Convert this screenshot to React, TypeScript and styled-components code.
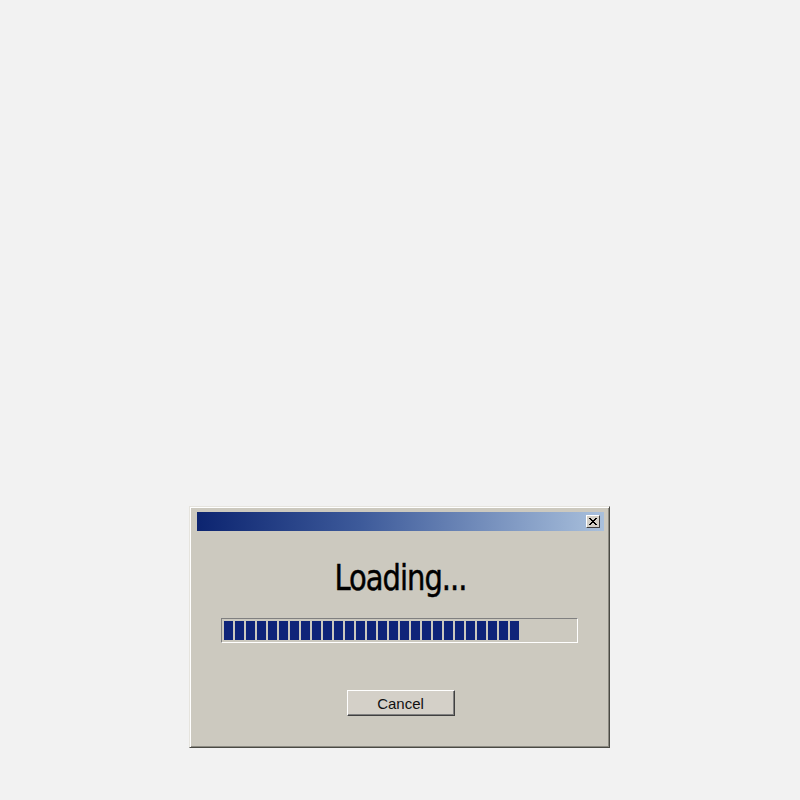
import React from 'react'
import styled, { createGlobalStyle } from 'styled-components'

const GlobalStyle = createGlobalStyle`
	html, body {
		margin: 0;
		padding: 0;
		background: #f2f2f2;
	}
`

const TOTAL_BLOCKS = 27

export default function App() {
	return (
		<>
			<GlobalStyle />
			<Page>
				<Dialog>
					<TitleBar>
						<CloseButton aria-label="Close">
							<svg width="8" height="7" viewBox="0 0 8 7">
								<path d="M0 0h2v1h1v1h2V1h1V0h2v1H7v1H6v1H5v1h1v1h1v1h1v1H6V6H5V5H3v1H2v1H0V6h1V5h1V4h1V3H2V2H1V1H0z" fill="#000" />
							</svg>
						</CloseButton>
					</TitleBar>
					<Body>
						<Heading>Loading...</Heading>
						<ProgressTrack>
							{Array.from({ length: TOTAL_BLOCKS }).map((_, i) => (
								<Block key={i} />
							))}
						</ProgressTrack>
						<ActionButton>Cancel</ActionButton>
					</Body>
				</Dialog>
			</Page>
		</>
	)
}

const Page = styled.div`
	width: 800px;
	height: 800px;
	box-sizing: border-box;
	padding: 506px 0 0 189px;
`

const Dialog = styled.div`
	width: 421px;
	height: 242px;
	box-sizing: border-box;
	background: #ccc9bf;
	border: 1px solid;
	border-color: #e6e4de #4a4a44 #4a4a44 #e6e4de;
	box-shadow: inset 1px 1px 0 #ffffff, inset -1px -1px 0 #8c8a82;
	padding: 5px 5px 0 7px;
	display: flex;
	flex-direction: column;
`

const TitleBar = styled.div`
	height: 19px;
	background: linear-gradient(to right, #0c2470 0%, #3d5a9a 40%, #a9c0dc 100%);
	display: flex;
	align-items: center;
	justify-content: flex-end;
	padding-right: 4px;
`

const CloseButton = styled.button`
	width: 14px;
	height: 13px;
	padding: 0;
	background: #d4d0c8;
	border: 1px solid;
	border-color: #ffffff #404040 #404040 #ffffff;
	display: flex;
	align-items: center;
	justify-content: center;
`

const Body = styled.div`
	display: flex;
	flex-direction: column;
	align-items: center;
`

const Heading = styled.div`
	margin-top: 25px;
	height: 44px;
	line-height: 44px;
	font-family: 'DejaVu Sans', sans-serif;
	font-size: 29px;
	letter-spacing: -1px;
	color: #000;
	transform: scaleY(1.2);
	-webkit-text-stroke: 0.4px #000;
`

const ProgressTrack = styled.div`
	margin-top: 18px;
	margin-left: -2px;
	width: 357px;
	height: 25px;
	box-sizing: border-box;
	border: 1px solid;
	border-color: #808080 #ffffff #ffffff #808080;
	padding: 2px;
	display: flex;
	gap: 2px;
	background: #ccc9bf;
`

const Block = styled.div`
	width: 9px;
	height: 100%;
	background: #0f2479;
	flex: none;
`

const ActionButton = styled.button`
	margin-top: 47px;
	width: 108px;
	height: 26px;
	background: #d4d0c8;
	border: 1px solid;
	border-color: #ffffff #404040 #404040 #ffffff;
	box-shadow: inset -1px -1px 0 #808080;
	font-family: 'Liberation Sans', Arial, sans-serif;
	font-size: 15px;
	color: #111;
	padding: 0;
`
